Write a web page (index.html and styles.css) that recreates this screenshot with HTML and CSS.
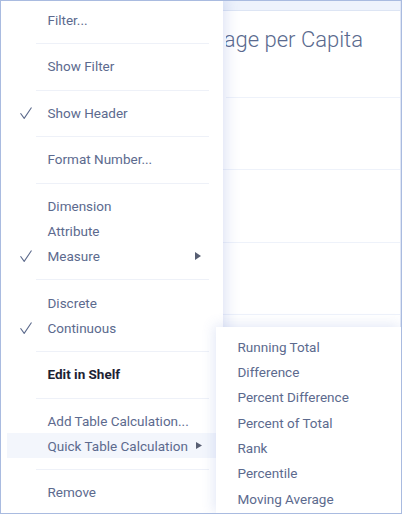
FILE: index.html
```html
<!DOCTYPE html>
<html>
<head>
<meta charset="utf-8">
<link rel="stylesheet" href="styles.css">
</head>
<body>
<div class="frame">
  <div class="sheet">
    <div class="strip"></div>
    <div class="title-row"><span class="title">Average per Capita</span></div>
    <div class="row"></div>
    <div class="row"></div>
    <div class="row"></div>
    <div class="row"></div>
  </div>

  <div class="menu">
    <div class="group">
      <div class="item"><span class="check"></span><span class="label">Filter...</span></div>
    </div>
    <div class="group">
      <div class="item"><span class="check"></span><span class="label">Show Filter</span></div>
    </div>
    <div class="group">
      <div class="item"><span class="check"><svg width="12" height="12" viewBox="0 0 12 12"><path d="M0.5 6.2 L4.2 11.4 L11.5 0.5" fill="none" stroke="#5c6a8c" stroke-width="1.1"/></svg></span><span class="label">Show Header</span></div>
    </div>
    <div class="group">
      <div class="item"><span class="check"></span><span class="label">Format Number...</span></div>
    </div>
    <div class="group">
      <div class="item"><span class="check"></span><span class="label">Dimension</span></div>
      <div class="item"><span class="check"></span><span class="label">Attribute</span></div>
      <div class="item"><span class="check"><svg width="12" height="12" viewBox="0 0 12 12"><path d="M0.5 6.2 L4.2 11.4 L11.5 0.5" fill="none" stroke="#5c6a8c" stroke-width="1.1"/></svg></span><span class="label">Measure</span><span class="arrow"><svg width="6" height="8" viewBox="0 0 6 8"><path d="M0 0 L6 4 L0 8 Z" fill="#575e72"/></svg></span></div>
    </div>
    <div class="group">
      <div class="item"><span class="check"></span><span class="label">Discrete</span></div>
      <div class="item"><span class="check"><svg width="12" height="12" viewBox="0 0 12 12"><path d="M0.5 6.2 L4.2 11.4 L11.5 0.5" fill="none" stroke="#5c6a8c" stroke-width="1.1"/></svg></span><span class="label">Continuous</span></div>
    </div>
    <div class="group">
      <div class="item bold"><span class="check"></span><span class="label">Edit in Shelf</span></div>
    </div>
    <div class="group">
      <div class="item"><span class="check"></span><span class="label">Add Table Calculation...</span></div>
      <div class="item active"><span class="check"></span><span class="label">Quick Table Calculation</span><span class="arrow tight"><svg width="6" height="7" viewBox="0 0 6 7"><path d="M0 0 L6 3.5 L0 7 Z" fill="#575e72"/></svg></span></div>
    </div>
    <div class="group">
      <div class="item"><span class="check"></span><span class="label">Remove</span></div>
    </div>
  </div>

  <div class="submenu">
    <div class="sub-item">Running Total</div>
    <div class="sub-item">Difference</div>
    <div class="sub-item">Percent Difference</div>
    <div class="sub-item">Percent of Total</div>
    <div class="sub-item">Rank</div>
    <div class="sub-item">Percentile</div>
    <div class="sub-item">Moving Average</div>
  </div>
</div>
</body>
</html>
```

FILE: styles.css
```css
html, body {
  margin: 0;
  padding: 0;
  background: #ffffff;
}

.frame {
  position: relative;
  width: 402px;
  height: 514px;
  box-sizing: border-box;
  border: 1px solid #a9bbe0;
  overflow: hidden;
  background: #ffffff;
  font-family: Roboto, "Liberation Sans", sans-serif;
}

.sheet {
  display: flex;
  flex-direction: column;
  height: 100%;
  border-right: 1px solid #dfe6f5;
}

.strip {
  height: 9px;
  background: #eef3fc;
  border-bottom: 1px solid #dde5f4;
  flex: none;
}

.title-row {
  height: 87px;
  flex: none;
  border-bottom: 1px solid #eef2fa;
  display: flex;
  justify-content: flex-end;
  margin-left: 224.5px;
  padding-right: 37px;
  padding-top: 16px;
  box-sizing: border-box;
  white-space: nowrap;
  overflow: hidden;
}

.title {
  font-size: 22px;
  font-weight: 300;
  line-height: 26px;
  color: #5a6a8e;
  flex: none;
}

.row {
  height: 72.4px;
  box-sizing: border-box;
  flex: none;
  border-bottom: 1px solid #eef2fa;
}

.menu {
  position: absolute;
  left: -1px;
  top: -3.6px;
  width: 223px;
  padding: 0 7px;
  box-sizing: border-box;
  background: #ffffff;
  box-shadow: 2px 0 14px rgba(80, 110, 200, 0.22);
}

.group {
  padding: 9.8px 0 10.8px;
  border-bottom: 1px solid #eef1f8;
  margin: 0 7px 0 29px;
}

.group .item {
  margin: 0 -7px 0 -29px;
}

.group:last-child {
  border-bottom: none;
}

.item {
  display: flex;
  align-items: center;
  height: 25px;
  font-size: 13.5px;
  color: #5c6a8e;
  white-space: nowrap;
}

.item.active {
  background: #f3f6fc;
}

.item.bold {
  font-weight: 700;
  color: #1d2233;
}

.check {
  width: 40.5px;
  flex: none;
  display: flex;
  align-items: center;
  padding-left: 13px;
  box-sizing: border-box;
  height: 12px;
}

.check svg {
  display: block;
}

.label {
  flex: none;
}

.arrow {
  margin-left: auto;
  margin-right: 15px;
  display: flex;
  align-items: center;
}

.arrow.tight {
  margin-left: 8px;
}

.arrow svg {
  display: block;
}

.submenu {
  position: absolute;
  left: 215px;
  top: 326px;
  right: -1px;
  bottom: -1px;
  padding: 7.5px 0 0 21.5px;
  background: #ffffff;
  box-shadow: -2px -2px 12px rgba(80, 110, 200, 0.16);
}

.sub-item {
  height: 25.4px;
  line-height: 25.4px;
  font-size: 13.5px;
  color: #5c6a8e;
  white-space: nowrap;
}
```
